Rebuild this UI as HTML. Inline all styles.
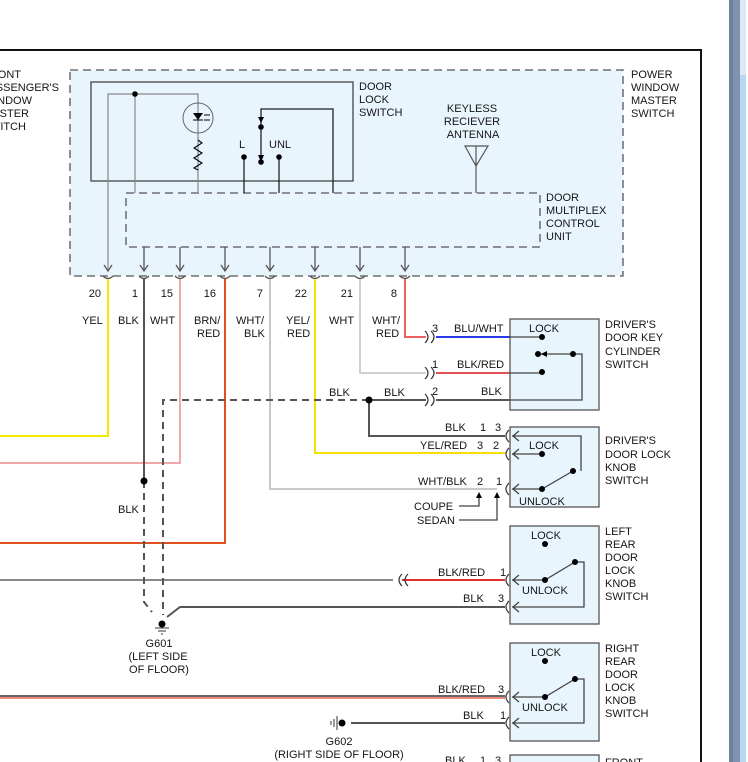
<!DOCTYPE html>
<html><head><meta charset="utf-8"><style>
html,body{margin:0;padding:0;background:#fff;width:748px;height:762px;overflow:hidden}
svg{display:block}
text{font-family:"Liberation Sans",Arial,sans-serif;font-size:11px;fill:#151515}
</style></head><body>
<svg width="748" height="762" viewBox="0 0 748 762">
<rect x="729" y="0" width="19" height="762" fill="#fff"/>
<rect x="729" y="0" width="11" height="762" fill="#6d819b"/>
<rect x="733" y="0" width="7" height="762" fill="#7f93ad"/>
<rect x="740" y="0" width="6" height="762" fill="#b9d6f2"/>
<rect x="740" y="0" width="6" height="75" fill="#dde8f2"/>
<line x1="0" y1="50" x2="702" y2="50" stroke="#111" stroke-width="2"/>
<line x1="701" y1="49" x2="701" y2="762" stroke="#111" stroke-width="2"/>

<g text-anchor="end">
<text x="21" y="78">FRONT</text><text x="59" y="91">PASSENGER'S</text><text x="32" y="104">WINDOW</text><text x="29" y="117">MASTER</text><text x="26" y="130">SWITCH</text>
</g>

<rect x="70" y="70" width="553" height="206" fill="#e9f5fd" stroke="#555" stroke-width="1.3" stroke-dasharray="8,5"/>
<text x="631" y="78">POWER</text><text x="631" y="91">WINDOW</text><text x="631" y="104">MASTER</text><text x="631" y="117">SWITCH</text>
<rect x="91" y="82" width="262" height="99" fill="none" stroke="#444" stroke-width="1.3"/>
<text x="359" y="90">DOOR</text><text x="359" y="103">LOCK</text><text x="359" y="116">SWITCH</text>
<rect x="126" y="193" width="414" height="54" fill="none" stroke="#555" stroke-width="1.3" stroke-dasharray="8,5"/>
<text x="546" y="201">DOOR</text><text x="546" y="214">MULTIPLEX</text><text x="546" y="227">CONTROL</text><text x="546" y="240">UNIT</text>
<g text-anchor="middle"><text x="472" y="112">KEYLESS</text><text x="472" y="125">RECIEVER</text><text x="473" y="138">ANTENNA</text></g>
<path d="M465 146 L488 146 L476 166 Z M476 146 V193" fill="none" stroke="#555" stroke-width="1.2"/>

<path d="M108 270 V94 H198 V193 M135 94 V193" fill="none" stroke="#888" stroke-width="1.2"/>
<circle cx="135" cy="94" r="2.8" fill="#000"/>
<circle cx="198" cy="118" r="15" fill="none" stroke="#666" stroke-width="1"/>
<path d="M193 113 H203 L198 120 Z" fill="#000"/><line x1="193" y1="120" x2="203" y2="120" stroke="#000"/>
<path d="M204 115 H210 M204 120 H210" stroke="#000" stroke-width="1"/>
<path d="M198 140 L202 143 L194 148 L202 153 L194 158 L202 163 L194 168 L198 170" fill="none" stroke="#000" stroke-width="1.1"/>
<path d="M261 127 V160 M244 157 V193 M279 157 V193 M261 127 V109 H333 V193" fill="none" stroke="#222" stroke-width="1.3"/>
<path d="M258 117 L261 123 L264 117" fill="#000"/>
<path d="M258 155 L261 162 L264 155 Z" fill="#000"/>
<circle cx="261" cy="127" r="2.8"/><circle cx="261" cy="162" r="2.8"/><circle cx="244" cy="157" r="2.8"/><circle cx="279" cy="157" r="2.8"/>
<text x="239" y="148">L</text><text x="269" y="148">UNL</text>

<g stroke="#555" stroke-width="1.3" fill="none">
<path d="M144 247 V270 M180 247 V270 M225 247 V270 M270 247 V270 M315 247 V270 M360 247 V270 M405 247 V270"/>
<path d="M104 265 L108 271 L112 265 M140 265 L144 271 L148 265 M176 265 L180 271 L184 265 M221 265 L225 271 L229 265 M266 265 L270 271 L274 265 M311 265 L315 271 L319 265 M356 265 L360 271 L364 265 M401 265 L405 271 L409 265"/>
<path d="M103 276 Q108 281 113 276 M139 276 Q144 281 149 276 M175 276 Q180 281 185 276 M220 276 Q225 281 230 276 M265 276 Q270 281 275 276 M310 276 Q315 281 320 276 M355 276 Q360 281 365 276 M400 276 Q405 281 410 276"/>
</g>
<g text-anchor="end"><text x="101" y="297">20</text><text x="138" y="297">1</text><text x="173" y="297">15</text><text x="216" y="297">16</text><text x="263" y="297">7</text><text x="307" y="297">22</text><text x="353" y="297">21</text><text x="397" y="297">8</text></g>
<text x="82" y="324">YEL</text><text x="118" y="324">BLK</text><text x="150" y="324">WHT</text>
<text x="194" y="324">BRN/</text><text x="197" y="337">RED</text>
<text x="236" y="324">WHT/</text><text x="244" y="337">BLK</text>
<text x="286" y="324">YEL/</text><text x="287" y="337">RED</text>
<text x="329" y="324">WHT</text>
<text x="372" y="324">WHT/</text><text x="376" y="337">RED</text>

<g fill="none" stroke-width="2">
<path d="M108 279 V436 H0" stroke="#f5e800"/>
<path d="M180 279 V463 H0" stroke="#f0a8a8"/>
<path d="M225 279 V543 H0" stroke="#e0501c"/>
<path d="M270 279 V489 H497" stroke="#c8c8c8"/>
<path d="M315 279 V453 H505" stroke="#f5e000"/>
<path d="M360 279 V373 H426" stroke="#d0d0d0"/>
<path d="M405 279 V337 H426" stroke="#f06060"/>
<path d="M436 337 H510" stroke="#2a3ae8"/>
<path d="M436 373 H510" stroke="#e05050"/>
<path d="M144 279 V481" stroke="#555"/>
<path d="M369 400 H426 M436 400 H510 M369 400 V436 H505" stroke="#555"/>
<path d="M0 580 H393" stroke="#888"/>
<path d="M402 580 H505" stroke="#e03030"/>
<path d="M167 617 L180 607 H505" stroke="#555"/>
<path d="M0 696 H505" stroke="#666"/>
<path d="M0 698 H505" stroke="#e04030" stroke-width="1.2"/>
<path d="M351 723 H505" stroke="#555"/>
</g>
<g fill="none" stroke="#555" stroke-width="2" stroke-dasharray="7,5">
<path d="M144 481 V602 L152 612"/>
<path d="M369 400 H163 V615"/>
</g>
<circle cx="144" cy="481" r="3.5"/><circle cx="369" cy="400" r="3.5"/>
<text x="118" y="513">BLK</text>
<text x="329" y="396">BLK</text><text x="384" y="396">BLK</text>
<circle cx="162" cy="624" r="3.5"/>
<path d="M155 628 H169 M158 631 H166 M161 634 H163" stroke="#333" stroke-width="1"/>
<g text-anchor="middle"><text x="159" y="647">G601</text><text x="158" y="660">(LEFT SIDE</text><text x="159" y="673">OF FLOOR)</text>
<text x="339" y="745">G602</text><text x="339" y="758">(RIGHT SIDE OF FLOOR)</text></g>
<circle cx="342" cy="723" r="3.5"/>
<path d="M337 716 V730 M334 719 V727 M331 721 V725" stroke="#333" stroke-width="1"/>

<g fill="none" stroke="#333" stroke-width="1.2">
<path d="M425 331 Q431 337 425 343 M431 331 Q437 337 431 343"/>
<path d="M425 367 Q431 373 425 379 M431 367 Q437 373 431 379"/>
<path d="M425 394 Q431 400 425 406 M431 394 Q437 400 431 406"/>
<path d="M402 574 Q396 580 402 586 M408 574 Q402 580 408 586"/>
</g>
<text x="432" y="332">3</text><text x="432" y="368">1</text><text x="432" y="395">2</text>
<text x="454" y="332">BLU/WHT</text><text x="457" y="368">BLK/RED</text><text x="481" y="395">BLK</text>

<g fill="#e9f5fd" stroke="#555" stroke-width="1.3">
<rect x="510" y="319" width="89" height="91"/>
<rect x="510" y="427" width="89" height="80"/>
<rect x="510" y="526" width="89" height="98"/>
<rect x="510" y="643" width="89" height="98"/>
<rect x="510" y="755" width="89" height="20"/>
</g>
<path d="M510 337 H542 M510 373 H542 M538 354 H582 V400 H510" fill="none" stroke="#444" stroke-width="1.3"/>
<path d="M541 354 L547 351 L547 357 Z"/>
<circle cx="542" cy="337" r="3"/><circle cx="538" cy="354" r="3"/><circle cx="573" cy="354" r="3"/><circle cx="542" cy="372" r="3"/>
<text x="529" y="332">LOCK</text>
<text x="605" y="328">DRIVER'S</text><text x="605" y="341">DOOR KEY</text><text x="605" y="355">CYLINDER</text><text x="605" y="368">SWITCH</text>

<g fill="none" stroke="#444" stroke-width="1.3">
<path d="M512 436 H581 V471 M512 454 H542 M512 489 H542 L573 471"/>
<path d="M519 431 L513 436 L519 441 M519 449 L513 454 L519 459 M519 484 L513 489 L519 494"/>
<path d="M509 430 Q503 436 509 442 M509 448 Q503 454 509 460 M509 483 Q503 489 509 495"/>
<path d="M459 506 H479 V497 M459 520 H497 V497"/>
</g>
<path d="M476 498 L479 492 L482 498 Z M494 498 L497 492 L500 498 Z"/>
<circle cx="542" cy="454" r="3"/><circle cx="542" cy="489" r="3"/><circle cx="573" cy="471" r="3"/>
<text x="529" y="449">LOCK</text><text x="519" y="505">UNLOCK</text>
<text x="445" y="431">BLK</text><text x="480" y="431">1</text><text x="495" y="431">3</text>
<text x="420" y="449">YEL/RED</text><text x="477" y="449">3</text><text x="493" y="449">2</text>
<text x="418" y="485">WHT/BLK</text><text x="477" y="485">2</text><text x="496" y="485">1</text>
<text x="414" y="510">COUPE</text><text x="417" y="524">SEDAN</text>
<text x="605" y="444">DRIVER'S</text><text x="605" y="458">DOOR LOCK</text><text x="605" y="471">KNOB</text><text x="605" y="484">SWITCH</text>

<g fill="none" stroke="#444" stroke-width="1.3">
<path d="M512 580 H545 L575 562 H584 V607 H512"/>
<path d="M519 575 L513 580 L519 585 M519 602 L513 607 L519 612"/>
<path d="M509 574 Q503 580 509 586 M509 601 Q503 607 509 613"/>
</g>
<circle cx="545" cy="544" r="3"/><circle cx="545" cy="580" r="3"/><circle cx="575" cy="562" r="3"/>
<text x="531" y="539">LOCK</text><text x="522" y="594">UNLOCK</text>
<text x="438" y="576">BLK/RED</text><text x="500" y="576">1</text>
<text x="463" y="602">BLK</text><text x="498" y="602">3</text>
<text x="605" y="535">LEFT</text><text x="605" y="548">REAR</text><text x="605" y="561">DOOR</text><text x="605" y="574">LOCK</text><text x="605" y="587">KNOB</text><text x="605" y="600">SWITCH</text>

<g fill="none" stroke="#444" stroke-width="1.3">
<path d="M512 697 H545 L575 679 H584 V723 H512"/>
<path d="M519 692 L513 697 L519 702 M519 718 L513 723 L519 728"/>
<path d="M509 691 Q503 697 509 703 M509 717 Q503 723 509 729"/>
</g>
<circle cx="545" cy="661" r="3"/><circle cx="545" cy="697" r="3"/><circle cx="575" cy="679" r="3"/>
<text x="531" y="656">LOCK</text><text x="522" y="711">UNLOCK</text>
<text x="438" y="693">BLK/RED</text><text x="498" y="693">3</text>
<text x="463" y="719">BLK</text><text x="500" y="719">1</text>
<text x="605" y="652">RIGHT</text><text x="605" y="665">REAR</text><text x="605" y="678">DOOR</text><text x="605" y="691">LOCK</text><text x="605" y="704">KNOB</text><text x="605" y="717">SWITCH</text>

<text x="445" y="764">BLK</text><text x="480" y="764">1</text><text x="495" y="764">3</text>
<text x="605" y="766">FRONT</text>
</svg>
</body></html>
